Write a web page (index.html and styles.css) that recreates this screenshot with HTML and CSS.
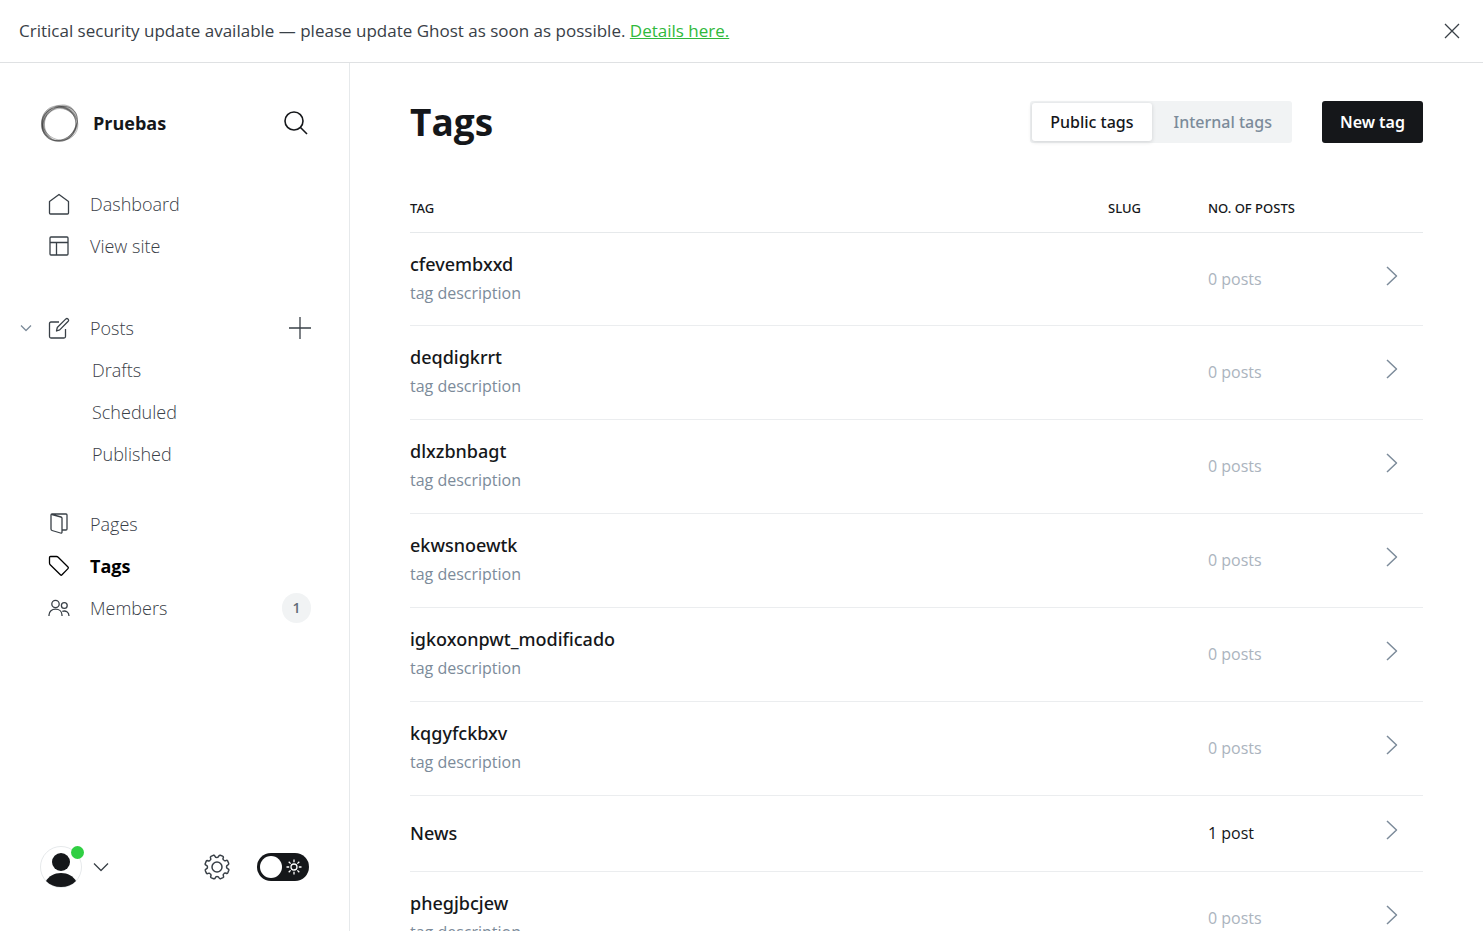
FILE: index.html
```html
<!DOCTYPE html>
<html lang="en">
<head>
<meta charset="utf-8">
<meta name="viewport" content="width=device-width, initial-scale=1">
<title>Tags - Pruebas</title>
<link rel="stylesheet" href="styles.css">
</head>
<body>
<div class="alert" role="status">
  <p class="alert-text">Critical security update available — please update Ghost as soon as possible. <a href="#details">Details here.</a></p>
  <button class="icon-button" type="button" aria-label="Close">
    <svg width="16" height="16" viewBox="0 0 16 16"><path d="M1 1l14 14M15 1L1 15"/></svg>
  </button>
</div>
<div class="app">
  <aside class="sidebar">
    <header class="site">
      <svg class="site-logo" width="40" height="40" viewBox="0 0 40 40">
        <path fill="#555" fill-opacity=".4" fill-rule="evenodd" d="M1 21C1 10 9 3 19 3s18 8 18 18-8 18-18 18S1 31 1 21zM4.500 22c0 9 6 15 14 15 9 0 17-8 17-17 0-8-7-14-15.500-14S4.500 13 4.500 22z"/>
        <path fill="#666" fill-opacity=".45" d="M14 4C20 0 30 1 34 7c3 3 4 7 3 12C34 10 26 5 14 4zM37.500 17c2 9-5 18-14 21 7-5 11-11 14-21zM1 20C2 12 7 6 13 5 7 10 5 15 5 22c0 6 4 11 8 14C5 34 0 28 1 20z"/>
        <g fill="none" stroke="#222" stroke-width=".8"><circle cx="19" cy="21" r="17" stroke-opacity=".6"/><ellipse cx="20" cy="20.500" rx="19" ry="15.500" transform="rotate(-42 20 20.500)" stroke-opacity=".5"/><ellipse cx="20" cy="20" rx="18.500" ry="16.500" transform="rotate(35 20 20)" stroke-opacity=".35"/></g>
      </svg>
      <span class="site-name">Pruebas</span>
      <button class="icon-button search" type="button" aria-label="Search">
        <svg width="26" height="26" viewBox="0 0 26 26"><circle cx="11" cy="11" r="9"/><path d="M17.500 17.500L24 24"/></svg>
      </button>
    </header>
    <nav class="nav" aria-label="Main">
      <ul class="nav-group">
        <li class="nav-item"><a href="#dashboard"><svg width="22" height="22" viewBox="0 0 22 22"><path d="M1.500 8.500L11 1.500l9.500 7V20q0 1-1 1h-17q-1 0-1-1z"/></svg>Dashboard</a></li>
        <li class="nav-item"><a href="#site"><svg width="22" height="22" viewBox="0 0 22 22"><rect x="2" y="2" width="18" height="18" rx="1"/><path d="M2 7.500h18M8.500 7.500V20"/></svg>View site</a></li>
      </ul>
      <ul class="nav-group nav-posts">
        <li class="nav-item">
          <button class="icon-button collapse" type="button" aria-label="Collapse posts"><svg width="12" height="8" viewBox="0 0 12 8"><path d="M1 1.500l5 5 5-5"/></svg></button>
          <a href="#posts"><svg width="22" height="22" viewBox="0 0 22 22"><path d="M11 5H3Q1.500 5 1.500 6.500v13Q1.500 21 3 21h13q1.500 0 1.500-1.500V12M8.500 14l.8-3.500 8.600-8.600q1-.8 2 0l.3.300q.9 1 0 2L11.700 12.900z"/></svg>Posts</a>
          <a class="add" href="#new-post" aria-label="New post"><svg width="22" height="22" viewBox="0 0 22 22"><path d="M11 0v22M0 11h22"/></svg></a>
        </li>
        <li class="nav-item nav-sub"><a href="#drafts">Drafts</a></li>
        <li class="nav-item nav-sub"><a href="#scheduled">Scheduled</a></li>
        <li class="nav-item nav-sub"><a href="#published">Published</a></li>
      </ul>
      <ul class="nav-group">
        <li class="nav-item"><a href="#pages"><svg width="22" height="22" viewBox="0 0 22 22"><path d="M4 1.500l9 2.500q1 .3 1 1.300V19q0 1.500-1.500 1L4 17.500q-1-.3-1-1.500V2q0-1 1-1h14q1 0 1 1v14q0 1-1 1h-4"/></svg>Pages</a></li>
        <li class="nav-item active"><a href="#tags" aria-current="page"><svg width="22" height="22" viewBox="0 0 22 22"><path d="M2.500 1.500h6q1 0 1.700.7L20 12q.8.800 0 1.600l-6 6.200q-.8.800-1.600 0L2.200 9.700q-.7-.7-.7-1.700V2.500q0-1 1-1z"/></svg>Tags</a></li>
        <li class="nav-item"><a href="#members"><svg width="22" height="22" viewBox="0 0 22 22"><circle cx="7.500" cy="7" r="3.700"/><circle cx="16.300" cy="8.500" r="2.900"/><path d="M1 19v-1c0-3.600 3-5.800 6.500-5.800S14 14.400 14 18v1M14.300 14.300c3.500-1 6.700.7 6.700 4.700"/></svg>Members<span class="count">1</span></a></li>
      </ul>
    </nav>
    <footer class="account">
      <button class="user" type="button" aria-label="Account menu">
        <span class="avatar">
          <svg width="42" height="42" viewBox="0 0 42 42"><circle class="ring" cx="21" cy="21" r="20.500"/><circle cx="21" cy="16" r="9"/><path d="M6 35c3-5 8-8 15-8s12 3 15 8c-4 4-9 6-15 6s-11-2-15-6z"/></svg>
          <span class="presence"></span>
        </span>
        <svg class="caret" width="16" height="10" viewBox="0 0 16 10"><path d="M1 1.500l7 7 7-7"/></svg>
      </button>
      <a class="settings" href="#settings" aria-label="Settings">
        <svg width="26" height="26" viewBox="0 0 26 26">
          <defs><path id="tooth" d="M13 3.500Q14.300 3.500 14.700 2.200 15.100.9 16.300 1.200L18.600 2.100Q19.700 2.700 19.200 3.900 18.600 5.200 19.700 6.300"/></defs>
          <circle cx="13" cy="13" r="5"/>
          <use href="#tooth"/><use href="#tooth" transform="rotate(45 13 13)"/><use href="#tooth" transform="rotate(90 13 13)"/><use href="#tooth" transform="rotate(135 13 13)"/><use href="#tooth" transform="rotate(180 13 13)"/><use href="#tooth" transform="rotate(225 13 13)"/><use href="#tooth" transform="rotate(270 13 13)"/><use href="#tooth" transform="rotate(315 13 13)"/>
        </svg>
      </a>
      <label class="switch">
        <input type="checkbox" aria-label="Dark mode">
        <svg width="16" height="16" viewBox="0 0 16 16"><circle cx="8" cy="8" r="3"/><path d="M8 .5v2.700M8 12.800v2.700M.5 8h2.700M12.800 8h2.700M2.700 2.700l1.900 1.900M11.400 11.400l1.900 1.900M2.700 13.300l1.900-1.900M11.400 4.600l1.900-1.900"/></svg>
      </label>
    </footer>
  </aside>
  <main class="main">
    <header class="page-header">
      <h1>Tags</h1>
      <div class="actions">
        <div class="segments" role="group" aria-label="Tag type">
          <button class="segment selected" type="button" aria-pressed="true">Public tags</button>
          <button class="segment" type="button" aria-pressed="false">Internal tags</button>
        </div>
        <a class="new-tag" href="#new-tag">New tag</a>
      </div>
    </header>
    <table class="tags">
      <thead><tr><th scope="col">TAG</th><th class="col-slug" scope="col">SLUG</th><th class="col-posts" scope="col">NO. OF POSTS</th><th class="col-open"></th></tr></thead>
      <tbody>
        <tr><td><a href="#cfevembxxd"><strong>cfevembxxd</strong><span>tag description</span></a></td><td></td><td>0 posts</td><td class="open"><svg width="12" height="20" viewBox="0 0 12 20"><path d="M1 1l9.500 9L1 19"/></svg></td></tr>
        <tr><td><a href="#deqdigkrrt"><strong>deqdigkrrt</strong><span>tag description</span></a></td><td></td><td>0 posts</td><td class="open"><svg width="12" height="20" viewBox="0 0 12 20"><path d="M1 1l9.500 9L1 19"/></svg></td></tr>
        <tr><td><a href="#dlxzbnbagt"><strong>dlxzbnbagt</strong><span>tag description</span></a></td><td></td><td>0 posts</td><td class="open"><svg width="12" height="20" viewBox="0 0 12 20"><path d="M1 1l9.500 9L1 19"/></svg></td></tr>
        <tr><td><a href="#ekwsnoewtk"><strong>ekwsnoewtk</strong><span>tag description</span></a></td><td></td><td>0 posts</td><td class="open"><svg width="12" height="20" viewBox="0 0 12 20"><path d="M1 1l9.500 9L1 19"/></svg></td></tr>
        <tr><td><a href="#igkoxonpwt"><strong>igkoxonpwt_modificado</strong><span>tag description</span></a></td><td></td><td>0 posts</td><td class="open"><svg width="12" height="20" viewBox="0 0 12 20"><path d="M1 1l9.500 9L1 19"/></svg></td></tr>
        <tr><td><a href="#kqgyfckbxv"><strong>kqgyfckbxv</strong><span>tag description</span></a></td><td></td><td>0 posts</td><td class="open"><svg width="12" height="20" viewBox="0 0 12 20"><path d="M1 1l9.500 9L1 19"/></svg></td></tr>
        <tr class="plain"><td><a href="#news"><strong>News</strong></a></td><td></td><td class="used">1 post</td><td class="open"><svg width="12" height="20" viewBox="0 0 12 20"><path d="M1 1l9.500 9L1 19"/></svg></td></tr>
        <tr><td><a href="#phegjbcjew"><strong>phegjbcjew</strong><span>tag description</span></a></td><td></td><td>0 posts</td><td class="open"><svg width="12" height="20" viewBox="0 0 12 20"><path d="M1 1l9.500 9L1 19"/></svg></td></tr>
      </tbody>
    </table>
  </main>
</div>
</body>
</html>
```
FILE: styles.css
```css
* { box-sizing: border-box; }
body {
  margin: 0;
  height: 100vh;
  display: flex;
  flex-direction: column;
  overflow: hidden;
  background: #fff;
  color: #15171a;
  font-family: "Segoe UI", "Open Sans", sans-serif;
  font-size: 17px;
}
a { color: inherit; text-decoration: none; }
button { font: inherit; color: inherit; border: 0; background: none; padding: 0; cursor: pointer; }
svg { display: block; flex: none; fill: none; stroke: currentColor; stroke-width: 1.3; stroke-linejoin: round; }
ul { margin: 0; padding: 0; list-style: none; }

.alert {
  flex: none;
  display: flex;
  align-items: center;
  justify-content: space-between;
  padding: 18px 23px 18px 19px;
  border-bottom: 1px solid #dfe1e3;
  color: #394047;
}
.alert-text { margin: 0; line-height: 26px; }
.alert a { color: #30b93c; text-decoration: underline; }

.app { flex: 1; min-height: 0; display: flex; }
.sidebar {
  flex: none;
  width: 350px;
  display: flex;
  flex-direction: column;
  border-right: 1px solid #e6e9eb;
  color: #394047;
}
.site { display: flex; align-items: center; padding: 40px 40px 40px; color: #15171a; }
.site-logo { stroke: none; margin-right: 13px; }
.site-name { font-weight: 700; font-size: 18px; line-height: 24px; }
.search { margin-left: auto; }
.search svg { stroke-width: 1.6; }
.nav { flex: 1; }
.nav-group { margin-bottom: 40px; }
.nav-posts { margin-bottom: 28px; }
.nav-item {
  display: flex;
  align-items: center;
  height: 42px;
  padding: 0 38px 0 48px;
  position: relative;
  font-size: 18px;
  font-weight: 300;
}
.nav-item a { display: flex; align-items: center; flex: 1; gap: 20px; }
.nav-item .add { flex: none; }
.nav-sub { padding-left: 92px; }
.active { color: #000; font-weight: 700; }
.collapse { position: absolute; left: 20px; color: #7c8b9a; }
.count {
  margin-left: auto;
  width: 29px;
  line-height: 30px;
  border-radius: 15px;
  background: #f1f3f4;
  color: #626d79;
  font-size: 14px;
  font-weight: 600;
  text-align: center;
}
.account { display: flex; align-items: center; padding: 0 40px 43px; }
.user { display: flex; align-items: center; gap: 11px; }
.avatar { position: relative; }
.avatar svg { fill: #15171a; stroke: none; }
.avatar .ring { fill: #fff; stroke: #e6e9eb; stroke-width: 1; }
.presence {
  position: absolute;
  top: 0;
  right: -2px;
  width: 13px;
  height: 13px;
  border-radius: 50%;
  background: #30cf43;
}
.settings { margin-left: auto; margin-right: 27px; }
.settings svg { stroke-width: 1.5; }
.switch {
  display: flex;
  align-items: center;
  gap: 4px;
  width: 52px;
  height: 28px;
  padding: 3px;
  border-radius: 14px;
  background: #15171a;
  color: #fff;
}
.switch input { appearance: none; margin: 0; width: 22px; height: 22px; border-radius: 50%; background: #fff; }

.main { flex: 1; min-width: 0; padding: 38px 60px 0; overflow: auto; scrollbar-width: none; }
.page-header { display: flex; align-items: center; justify-content: space-between; }
h1 { margin: 0; font-size: 37px; line-height: 42px; font-weight: 700; }
.actions { display: flex; gap: 30px; font-family: "Segoe UI", "Noto Sans", sans-serif; }
.segments { display: flex; padding: 2px 2px; border-radius: 3px; background: #f1f3f4; }
.segment { height: 38px; padding: 0 18px; border-radius: 3px; font-size: 16px; font-weight: 500; color: #7c8b9a; }
.selected { background: #fff; color: #15171a; box-shadow: 0 1px 4px #15171a26; }
.segment + .segment { padding: 0 18px 0 22px; }
.new-tag { padding: 0 18px; border-radius: 3px; background: #15171a; color: #fff; font-size: 16px; line-height: 42px; font-weight: 600; }

.tags { width: 100%; margin-top: 40px; border-collapse: collapse; table-layout: fixed; }
.tags th { height: 49px; padding: 1px 0 0; border-bottom: 1px solid #e6e9eb; text-align: left; font-family: "Segoe UI", "Noto Sans", sans-serif; font-size: 13px; font-weight: 500; }
.col-slug { width: 100px; }
.col-posts { width: 178px; }
.col-open { width: 37px; }
.tags td { height: 94px; padding: 0; border-bottom: 1px solid #ebedef; font-size: 16px; color: #abb4be; }
.tags tbody tr:first-child td { height: 93px; }
.tags .plain td { height: 76px; }
.tags .used { color: #15171a; }
.tags .open { padding-bottom: 6px; }
.tags td svg { color: #7c8b9a; stroke-width: 1.5; }
.tags strong, .tags td span { display: block; }
.tags strong { color: #15171a; font-family: "Segoe UI", "Noto Sans", sans-serif; font-size: 18px; line-height: 28px; font-weight: 500; }
.tags td span { color: #7c8b9a; line-height: 30px; }
```
